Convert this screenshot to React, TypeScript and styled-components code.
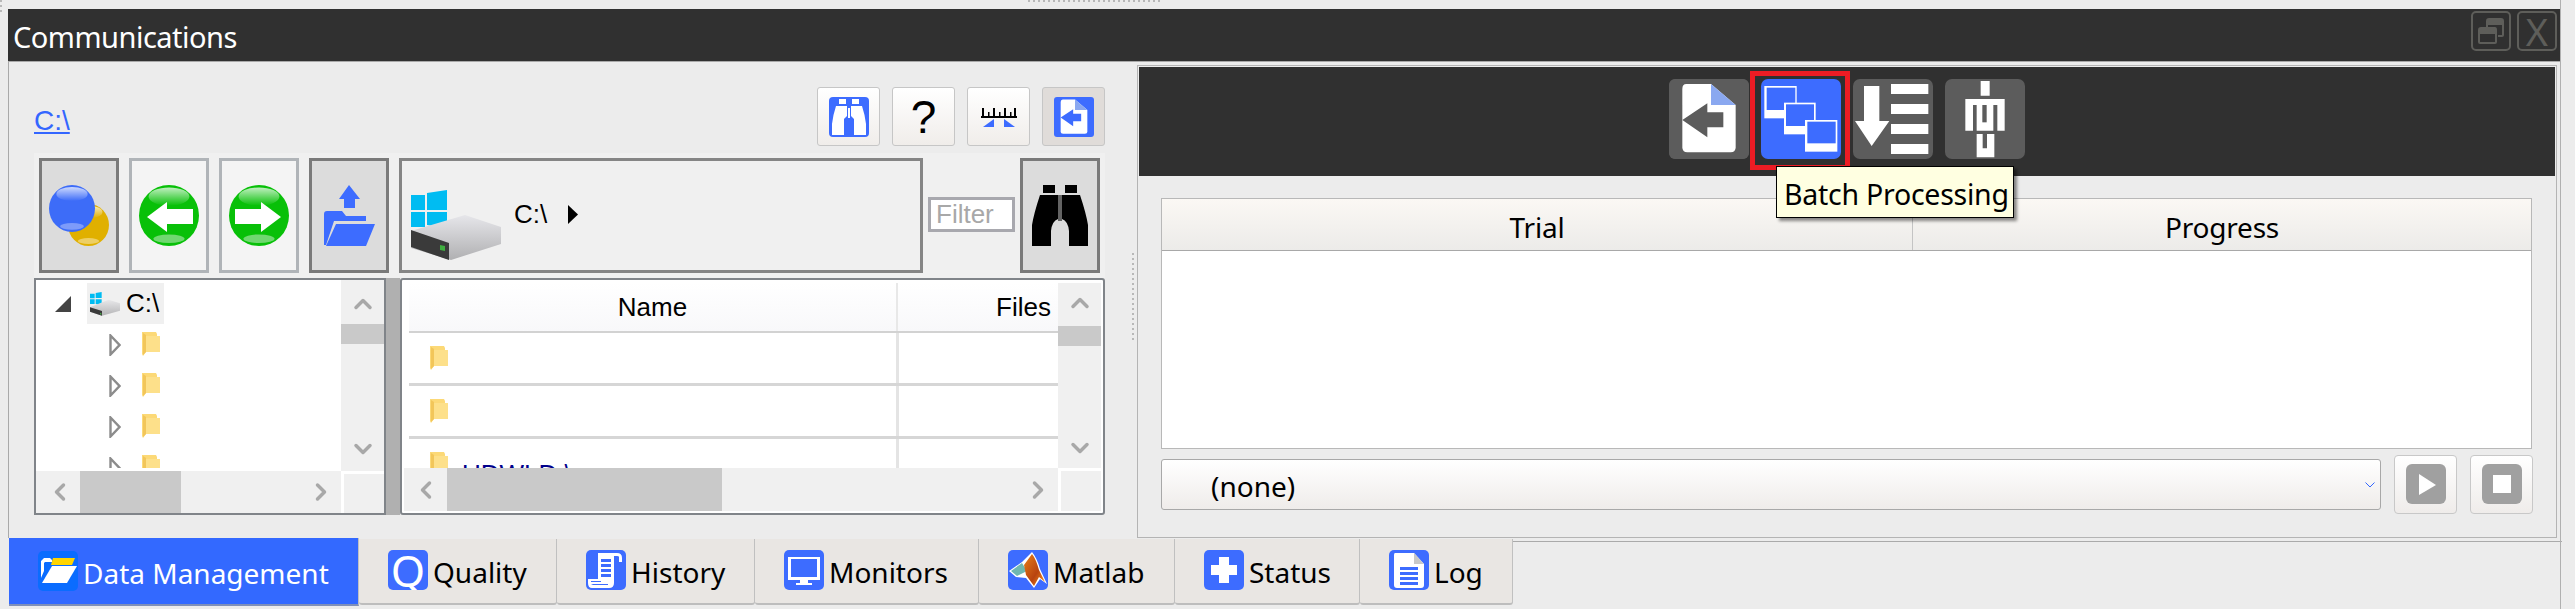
import * as React from 'react';
import styled, { createGlobalStyle } from 'styled-components';
import { ChevronUp, ChevronDown, ChevronLeft, ChevronRight } from 'lucide-react';

const UI_FONT = `"Noto Sans", "Open Sans", sans-serif`;
const TABLE_FONT = `"Liberation Sans", Arial, sans-serif`;
const BLUE = '#3d6cff';

const GlobalStyle = createGlobalStyle`
  html, body { margin: 0; padding: 0; background: #ececec; overflow: hidden; }
  * { box-sizing: border-box; }
`;

const Page = styled.div`
  position: relative;
  width: 2575px;
  height: 609px;
  padding: 9px 14px 0 8px;
  background: #ececec;
  font-family: ${UI_FONT};
`;

const CornerDots = styled.div`
  position: absolute;
  left: 0;
  top: 0;
  width: 2px;
  height: 14px;
  background: repeating-linear-gradient(to bottom, #b8b8b8 0 2px, transparent 2px 5px);
`;

const TopDots = styled.div`
  position: absolute;
  left: 1028px;
  top: 0;
  width: 132px;
  height: 2px;
  background: repeating-linear-gradient(to right, #b8b8b8 0 2px, transparent 2px 5px);
`;

const EdgeLine = styled.div`
  position: absolute;
  left: 2560px;
  top: 0;
  width: 1px;
  height: 609px;
  background: #b0b0b0;
`;

const TitleBar = styled.header`
  display: flex;
  align-items: center;
  justify-content: space-between;
  height: 53px;
  padding: 0 4px 0 5px;
  background: #303030;
  border-bottom: 1px solid #a9a9a9;
`;

const TitleText = styled.span`
  color: #fff;
  font-size: 29px;
  letter-spacing: -0.5px;
  line-height: 1;
  margin-top: 2px;
`;

const WindowButtons = styled.div`
  display: flex;
  gap: 6px;
  margin-top: -8px;
`;

const WindowButton = styled.div`
  display: flex;
  align-items: center;
  justify-content: center;
  width: 40px;
  height: 40px;
  border: 2px solid #5e5e5a;
  border-radius: 5px;
  color: #5e5e5a;
  font-size: 38px;
  line-height: 1;
`;

const Work = styled.div`
  display: flex;
  height: 476px;
  border-left: 1px solid #a9a9a9;
`;

const LeftPane = styled.section`
  width: 1121px;
  padding: 25px 0 0 25px;
  flex: none;
`;

const PathRow = styled.div`
  display: flex;
  align-items: center;
  justify-content: space-between;
  width: 1071px;
  height: 59px;
`;

const PathLink = styled.a`
  color: #3366ff;
  font-family: ${TABLE_FONT};
  font-size: 28px;
  line-height: 30px;
  margin-top: 8px;
  text-decoration: underline;
`;

const ToolGroup = styled.div`
  display: flex;
  gap: 12px;
`;

const ToolButton = styled.div<{ $on?: boolean }>`
  display: flex;
  align-items: center;
  justify-content: center;
  width: 63px;
  height: 59px;
  border: 1px solid #c6c6c6;
  border-radius: 3px;
  background: ${p => (p.$on ? '#e0dcd9' : 'linear-gradient(to bottom, #ffffff, #f0edea)')};
  font-family: ${TABLE_FONT};
  font-size: 46px;
  line-height: 1;
  color: #000;
`;

const NavStrip = styled.div`
  display: flex;
  align-items: stretch;
  gap: 10px;
  width: 1071px;
  height: 125px;
  margin-top: 7px;
  padding: 5px;
  background: #f0f0f0;
`;

const NavButton = styled.div<{ $pressed?: boolean }>`
  display: flex;
  align-items: center;
  justify-content: center;
  width: 80px;
  flex: none;
  border: 3px solid ${p => (p.$pressed ? '#7a7a7a' : '#b0b4b8')};
  background: ${p => (p.$pressed ? '#dcdcdc' : '#f4f4f4')};
`;

const AddressBox = styled.div`
  display: flex;
  align-items: center;
  width: 524px;
  flex: none;
  padding-left: 9px;
  border: 3px solid #858585;
  background: #f0f0f0;
  font-family: ${TABLE_FONT};
  font-size: 26px;
  color: #000;
`;

const DriveSlot = styled.div`
  display: flex;
  margin-top: 19px;
`;

const AddressText = styled.span`
  margin: -2px 21px 0 11px;
`;

const AddressCaret = styled.svg`
  margin-top: -2px;
`;

const FilterGroup = styled.div`
  display: flex;
  align-items: stretch;
  gap: 5px;
  margin-left: -5px;
`;

const FilterInput = styled.input`
  align-self: center;
  width: 87px;
  height: 35px;
  margin-top: -2px;
  padding: 0 0 0 5px;
  border: 3px solid #a8a8ae;
  background: #fff;
  font-family: ${TABLE_FONT};
  font-size: 26px;
  outline: none;
  &::placeholder { color: #a8a8a8; opacity: 1; }
`;

const Browser = styled.div`
  display: flex;
  width: 1071px;
  height: 237px;
`;

const TreePane = styled.div`
  display: grid;
  grid-template-columns: 1fr 43px;
  grid-template-rows: 191px 42px;
  width: 352px;
  flex: none;
  border: 2px solid #808489;
  background: #fff;
`;

const SplitBar = styled.div`
  width: 14px;
  flex: none;
  background: #b0b0b0;
`;

const ListPane = styled.div`
  display: grid;
  grid-template-columns: 1fr 43px;
  grid-template-rows: 185px 43px;
  flex: 1;
  padding: 3px 2px 2px 2px;
  border: 2px solid #808489;
  border-radius: 3px;
  background: #fff;
`;

const TreeView = styled.div`
  overflow: hidden;
  padding-top: 3px;
  height: 188px;
  font-family: ${TABLE_FONT};
  font-size: 26px;
`;

const TreeRow = styled.div<{ $depth: number }>`
  display: flex;
  align-items: center;
  height: 41px;
  padding-left: ${p => (p.$depth === 0 ? 19 : 73)}px;
  gap: ${p => (p.$depth === 0 ? 16 : 21)}px;
`;

const TreeSelected = styled.div`
  display: flex;
  align-items: center;
  gap: 6px;
  width: 77px;
  height: 41px;
  padding-left: 3px;
  background: #f0f0f0;
`;

const TreeClipped = styled.span`
  margin: 26px 0 0 -7px;
  color: #000;
  white-space: nowrap;
`;

const ListView = styled.div`
  overflow: hidden;
  padding-left: 5px;
  font-family: ${TABLE_FONT};
  font-size: 26px;
`;

const ListHeader = styled.div`
  display: grid;
  grid-template-columns: 487px 1fr;
  height: 50px;
  border-bottom: 2px solid #d2d2d2;
  background: linear-gradient(to bottom, #ffffff, #f8f8fa);
  color: #000;
`;

const HeaderCell = styled.div<{ $end?: boolean }>`
  display: flex;
  align-items: center;
  justify-content: ${p => (p.$end ? 'flex-end' : 'center')};
  padding-right: ${p => (p.$end ? 7 : 0)}px;
  border-left: ${p => (p.$end ? '2px solid #e8e8e8' : 'none')};
`;

const ListRow = styled.div`
  display: grid;
  grid-template-columns: 487px 1fr;
  height: 53px;
  border-bottom: 3px solid #d6d6d6;
`;

const NameCell = styled.div`
  display: flex;
  align-items: flex-start;
  gap: 14px;
  padding: 13px 0 0 21px;
  color: #00008b;
  line-height: 30px;
  white-space: nowrap;
`;

const FilesCell = styled.div`
  border-left: 3px solid #e4e4e4;
`;

const ClippedName = styled.span`
  margin-top: 7px;
`;

const VBar = styled.div<{ $pb?: number }>`
  display: flex;
  flex-direction: column;
  padding-bottom: ${p => p.$pb ?? 0}px;
  background: #f0f0f0;
`;

const VBtn = styled.div<{ $h: number; $mt?: number }>`
  display: flex;
  align-items: center;
  justify-content: center;
  height: ${p => p.$h}px;
  flex: none;
  margin-top: ${p => p.$mt ?? 0}px;
  color: #a8a8a8;
`;

const VThumb = styled.div`
  height: 20px;
  flex: none;
  background: #c9c9c9;
`;

const VSpace = styled.div`
  flex: 1;
`;

const HBar = styled.div<{ $inset?: number }>`
  display: flex;
  align-items: stretch;
  padding-left: ${p => p.$inset ?? 0}px;
  background: #f0f0f0;
`;

const HBtn = styled.div<{ $w?: number }>`
  display: flex;
  align-items: center;
  justify-content: center;
  width: ${p => p.$w ?? 40}px;
  flex: none;
  color: #a8a8a8;
`;

const HThumb = styled.div<{ $w: number }>`
  width: ${p => p.$w}px;
  flex: none;
  background: #c9c9c9;
`;

const HTrackEnd = styled.div`
  flex: 1;
`;

const Corner = styled.div`
  margin: 3px 0 0 3px;
  background: #f0f0f0;
`;

const Grip = styled.div`
  width: 7px;
  flex: none;
  display: flex;
  justify-content: center;
`;

const GripDots = styled.div`
  width: 2px;
  height: 87px;
  margin-top: 191px;
  margin-left: -2px;
  background: repeating-linear-gradient(to bottom, #b8b8b8 0 2px, transparent 2px 5px);
`;

const RightPane = styled.section`
  flex: 1;
  height: 473px;
  margin-top: 3px;
  margin-right: 4px;
  padding: 1px;
  border: 1px solid #b4b4b4;
`;

const ActionBar = styled.div`
  display: flex;
  justify-content: center;
  align-items: flex-start;
  gap: 12px;
  height: 109px;
  padding-top: 12px;
  background: #303030;
`;

const ActionButton = styled.div<{ $on?: boolean }>`
  position: relative;
  width: 80px;
  height: 80px;
  border-radius: 7px;
  background: ${p => (p.$on ? BLUE : '#5c5c5c')};
`;

const Highlight = styled.div`
  position: absolute;
  left: -11px;
  top: -8px;
  width: 100px;
  height: 99px;
  border: 5px solid #ed1c24;
  pointer-events: none;
`;

const Tooltip = styled.div`
  position: absolute;
  left: 15px;
  top: 87px;
  z-index: 5;
  width: 238px;
  height: 52px;
  padding-left: 7px;
  border: 1px solid #000;
  background: #ffffe1;
  box-shadow: 3px 3px 3px rgba(0, 0, 0, 0.45);
  color: #000;
  font-size: 28.5px;
  letter-spacing: -0.25px;
  line-height: 54px;
  white-space: nowrap;
`;

const TrialTable = styled.div`
  display: flex;
  flex-direction: column;
  height: 251px;
  margin: 22px 23px 0 22px;
  border: 1px solid #b8b8b8;
  background: #fff;
`;

const TrialHead = styled.div`
  display: grid;
  grid-template-columns: 750px 1fr;
  height: 52px;
  flex: none;
  border-bottom: 1px solid #a8a8a8;
  background: linear-gradient(to bottom, #fbf8f4, #ecebe9);
`;

const TrialCol = styled.div<{ $split?: boolean }>`
  display: flex;
  align-items: center;
  justify-content: center;
  padding-top: 4px;
  border-left: ${p => (p.$split ? '1px solid #c4c4c4' : 'none')};
  color: #000;
  font-size: 28px;
  letter-spacing: -0.2px;
`;

const RunRow = styled.div`
  display: flex;
  align-items: center;
  gap: 13px;
  height: 58px;
  margin: 6px 22px 0 22px;
`;

const Combo = styled.div`
  position: relative;
  display: flex;
  align-items: center;
  flex: 1;
  height: 51px;
  padding: 4px 0 0 49px;
  border: 1px solid #a8a8a8;
  border-radius: 3px;
  background: linear-gradient(to bottom, #ffffff, #efecea);
  color: #000;
  font-size: 28px;
`;

const ComboArrow = styled.svg`
  position: absolute;
  right: 5px;
  top: 22px;
`;

const RunButton = styled.div`
  display: flex;
  align-items: center;
  justify-content: center;
  width: 63px;
  height: 59px;
  flex: none;
  border: 1px solid #c8c8c8;
  border-radius: 4px;
  background: linear-gradient(to bottom, #ffffff, #efecea);
`;

const TabBar = styled.nav`
  display: flex;
  align-items: flex-start;
  margin-left: 1px;
`;

const Tab = styled.div<{ $w: number; $active?: boolean }>`
  display: flex;
  align-items: center;
  gap: 5px;
  width: ${p => p.$w}px;
  height: ${p => (p.$active ? 68 : 66)}px;
  flex: none;
  padding: ${p => (p.$active ? '0 0 0 29px' : '0 0 2px 29px')};
  margin-top: ${p => (p.$active ? 0 : 1)}px;
  background: ${p => (p.$active ? '#3369ff' : '#e9e6e3')};
  border-bottom: ${p => (p.$active ? '2px solid #7f8fb8' : '2px solid #bdbdbd')};
  border-right: 1px solid #c0c0c0;
  border-radius: ${p => (p.$active ? 0 : '0 0 3px 3px')};
  color: ${p => (p.$active ? '#fff' : '#000')};
  font-size: 28px;
  line-height: 1;
  white-space: nowrap;
`;

const TabLabel = styled.span`
  margin-top: 4px;
`;

const TabBadge = styled.div<{ $color?: string }>`
  display: flex;
  align-items: center;
  justify-content: center;
  width: 40px;
  height: 40px;
  flex: none;
  overflow: hidden;
  border-radius: 5px;
  background: ${p => p.$color ?? BLUE};
  color: #fff;
  font-size: 44px;
  line-height: 40px;
`;

const TabRest = styled.div`
  flex: 1;
  height: 1px;
  margin-top: 3px;
  margin-right: -1px;
  background: #aaaaaa;
`;

const DriveIcon = ({ size }: { size: number }) => (
  <svg width={size} height={size} viewBox="0 0 90 70">
    <defs>
      <linearGradient id={`dr${size}`} x1="0" y1="0" x2="0" y2="1">
        <stop offset="0" stopColor="#e8e8ea" />
        <stop offset="1" stopColor="#b4b4b6" />
      </linearGradient>
    </defs>
    <path d="M0 4h14v14H0zM17 2l18-3v18H17zM0 21h14v14H0zM17 21h18v17l-18-3z" fill="#00bcf2" />
    <path d="M0 45 L56 22 L90 33 V55 L36 70 L0 58 Z" fill={`url(#dr${size})`} />
    <path d="M0 45 L36 56 V70 L0 58 Z" fill="#3a3a3a" />
    <path d="M30 62l4 1v4l-4-1z" fill="#3fae3f" />
  </svg>
);

const TreeFolder = () => (
  <svg width="18" height="26" viewBox="0 0 18 26">
    <path d="M0 0h14l1 2v18H4l-3 4-1-2z" fill="#fcd977" />
    <path d="M4 4h14v16H4z" fill="#fde08a" />
    <path d="M1 1v22l3-3V3z" fill="#f2c65a" />
  </svg>
);

const OpenArrow = () => (
  <svg width="16" height="16" viewBox="0 0 16 16">
    <path d="M0 16 L16 0 V16 Z" fill="#444" />
  </svg>
);

const ClosedArrow = () => (
  <svg width="12" height="22" viewBox="0 0 12 22">
    <path d="M1.5 1.5 L10.5 11 L1.5 20.5 Z" fill="#fff" stroke="#8c8c8c" strokeWidth="2.4" />
  </svg>
);

const Sphere = ({ id, color, light, cx, cy, rx, ry }: { id: string; color: string; light: string; cx: number; cy: number; rx: number; ry: number }) => (
  <>
    <defs>
      <linearGradient id={id} x1="0" y1="0" x2="0" y2="1">
        <stop offset="0" stopColor="#fff" stopOpacity="0.75" />
        <stop offset="1" stopColor="#fff" stopOpacity="0" />
      </linearGradient>
    </defs>
    <ellipse cx={cx} cy={cy} rx={rx} ry={ry} fill={color} />
    <ellipse cx={cx} cy={cy - ry * 0.62} rx={rx * 0.68} ry={ry * 0.3} fill={`url(#${id})`} />
    <ellipse cx={cx} cy={cy + ry * 0.76} rx={rx * 0.52} ry={ry * 0.14} fill={light} />
  </>
);

const ModeIcon = () => (
  <svg width="60" height="61" viewBox="0 0 60 61">
    <Sphere id="yel" color="#e0b000" light="#edcf66" cx={39.5} cy={40} rx={20.5} ry={21} />
    <Sphere id="blu" color="#3d6cf8" light="#7d9bfa" cx={23} cy={23.5} rx={23} ry={23.5} />
  </svg>
);

const GreenArrow = ({ dir }: { dir: 'left' | 'right' }) => (
  <svg width="60" height="61" viewBox="0 0 60 61">
    <Sphere id={`gr${dir}`} color="#08c008" light="#70d870" cx={30} cy={30.5} rx={30} ry={30.5} />
    <path
      d={dir === 'left' ? 'M8 32 L28 17 V24 H54 V39 H28 V47 Z' : 'M52 32 L32 17 V24 H6 V39 H32 V47 Z'}
      fill="#fff"
    />
  </svg>
);

const FolderUp = () => (
  <svg width="51" height="61" viewBox="0 0 51 61">
    <path d="M25 0 L36 14 H31 V23 H20 V14 H15 Z" fill={BLUE} />
    <path d="M0 38 V29 Q0 26 3 26 H18 L22 31 H42 V36 H10 L2 60 H0 Z" fill={BLUE} />
    <path d="M12 39 H51 L42 61 H2 Z" fill={BLUE} />
  </svg>
);

const BigDrive = () => (
  <svg width="92" height="70" viewBox="0 0 92 70">
    <defs>
      <linearGradient id="bigdr" x1="0" y1="0" x2="0" y2="1">
        <stop offset="0" stopColor="#e6e6ea" />
        <stop offset="1" stopColor="#b0b0b2" />
      </linearGradient>
    </defs>
    <path d="M0 5h14v15H0zM16 3l20-3v20H16zM0 22h14v15H0zM16 22h20v16l-20-3z" fill="#00bcf2" />
    <path d="M0 41 L54 25 L90 37 V54 L40 70 L0 58 Z" fill="url(#bigdr)" />
    <path d="M0 40 L38 53 V70 L0 57 Z" fill="#3a3a3a" />
    <path d="M29 55l5 1v5l-5-1z" fill="#3fae3f" />
  </svg>
);

const BinocularsShape = ({ color }: { color: string }) => (
  <>
    <rect x="11" y="0" width="12" height="8" fill={color} />
    <rect x="33" y="0" width="12" height="8" fill={color} />
    <path d="M8 10 H26 V34 Q20 36 19 46 V61 H0 V40 Q2 28 8 10 Z M30 10 H48 Q54 28 56 40 V61 H37 V46 Q36 36 30 34 Z" fill={color} />
    <rect x="26" y="10" width="4" height="26" fill={color} opacity="0.55" />
  </>
);

const BigBinoculars = () => (
  <svg width="56" height="61" viewBox="0 0 56 61">
    <BinocularsShape color="#000" />
  </svg>
);

const BlueBinoculars = () => (
  <svg width="40" height="40" viewBox="0 0 40 40">
    <rect width="40" height="40" rx="4" fill={BLUE} />
    <rect x="10" y="2" width="7" height="5" fill="#fff" />
    <rect x="23" y="2" width="7" height="5" fill="#fff" />
    <path d="M7 9 H18 V19 Q17 20 15 22 V38 H3 V27 Q4 18 7 9 Z M22 9 H33 Q36 18 37 27 V38 H25 V22 Q23 20 22 19 Z" fill="#fff" />
    <rect x="19" y="11" width="2" height="10" fill="#fff" />
  </svg>
);

const RulerIcon = () => (
  <svg width="36" height="20" viewBox="0 0 36 20">
    <path d="M0 9 H36 V11 H0 Z M1 1 h2 v9 h-2z M7 5 h1.5 v5 h-1.5z M12 1 h2 v9 h-2z M18 5 h1.5 v5 h-1.5z M23 1 h2 v9 h-2z M29 5 h1.5 v5 h-1.5z M33 1 h2 v9 h-2z" fill="#000" />
    <path d="M2 20 L13 12 V20 Z M34 20 L23 12 V20 Z" fill={BLUE} />
  </svg>
);

const BackDoc = ({ size, bg, fold, arrow }: { size: number; bg: string; fold: string; arrow: string }) => (
  <svg width={size} height={size} viewBox="0 0 240 240">
    <rect width="240" height="240" rx="18" fill={bg} />
    <path d="M52 15 H126 L200 78 V205 Q200 220 185 220 H55 Q40 220 40 205 V30 Q40 15 52 15 Z" fill="#fff" />
    <path d="M126 15 L200 78 H126 Z" fill={fold} />
    <path d="M40 123 L115 73 V100 H163 V145 H115 V175 Z" fill={arrow} />
  </svg>
);

const BatchIcon = () => (
  <svg width="80" height="80" viewBox="0 0 240 240">
    <rect x="10" y="21" width="97" height="97" fill="#fff" />
    <rect x="17" y="26" width="86" height="67" fill={BLUE} />
    <rect x="69" y="71" width="95" height="95" fill="#fff" />
    <rect x="75" y="76" width="84" height="65" fill={BLUE} />
    <rect x="132" y="123" width="97" height="95" fill="#fff" />
    <rect x="139" y="128" width="85" height="65" fill={BLUE} />
  </svg>
);

const SortIcon = () => (
  <svg width="80" height="80" viewBox="0 0 240 240">
    <path d="M33 21 H79 V126 H109 L56 201 L6 126 H33 Z" fill="#fff" />
    <path d="M114 15 H226 V45 H114 Z M114 75 H226 V105 H114 Z M114 135 H226 V165 H114 Z M114 195 H226 V225 H114 Z" fill="#fff" />
  </svg>
);

const PersonIcon = () => (
  <svg width="80" height="80" viewBox="0 0 240 240">
    <path
      d="M107 6 H134 V50 H107 Z M61 60 H179 V155 H157 V78 H145 V155 H95 V78 H84 V155 H61 Z M95 165 H113 V208 H126 V165 H148 V235 H95 Z"
      fill="#fff"
    />
    <rect x="112" y="78" width="13" height="52" fill="#5c5c5c" />
  </svg>
);

const PlayIcon = () => (
  <svg width="40" height="40" viewBox="0 0 40 40">
    <rect width="40" height="40" rx="6" fill="#a0a0a0" />
    <path d="M13 10 L30 21 L13 31 Z" fill="#fff" />
  </svg>
);

const StopIcon = () => (
  <svg width="40" height="40" viewBox="0 0 40 40">
    <rect width="40" height="40" rx="6" fill="#a0a0a0" />
    <rect x="11" y="11" width="18" height="18" fill="#fff" />
  </svg>
);

const RestoreIcon = () => (
  <svg width="30" height="30" viewBox="0 0 30 30">
    <path d="M10 5 Q10 2 13 2 H25 Q28 2 28 5 V19 Q28 21 26 21 H22 V19 H26 V9 H12 V11 H10 Z" fill="#5e5e5a" />
    <path d="M2 14 Q2 11 5 11 H19 Q21 11 21 14 V26 Q21 28 19 28 H4 Q2 28 2 26 Z M4 18 V26 H19 V18 Z" fill="#5e5e5a" />
  </svg>
);

const OpenFolderBadge = () => (
  <svg width="40" height="40" viewBox="0 0 40 40">
    <path d="M15 7 H37 L34 14 H13 Z" fill="#ffd400" />
    <path d="M3 27 V10 L6 7 H12 L14 9 V11 H7 L6 12 V20 Z" fill="#fff" />
    <path d="M14 15 H39 L29 32 H4 Z" fill="#fff" />
  </svg>
);

const ScrollIcon = () => (
  <svg width="40" height="40" viewBox="0 0 40 40">
    <path d="M12 3 H31 Q36 3 36 8 V12 H33 V7 Q33 6 31 6 H28 V33 Q28 38 23 38 H6 Q2 38 2 33 V29 H12 Z" fill="#fff" />
    <path d="M5 32 H15 V31 H5 Z M5 34 H22 V35 H7 Z" fill={BLUE} />
    <path d="M15 9 H25 V12 H15 Z M15 14 H25 V17 H15 Z M15 19 H25 V22 H15 Z M15 24 H25 V27 H15 Z" fill={BLUE} />
  </svg>
);

const MonitorIcon = () => (
  <svg width="40" height="40" viewBox="0 0 40 40">
    <path d="M4 7 H36 V30 H4 Z M7 9 V27 H33 V9 Z" fill="#fff" fillRule="evenodd" />
    <path d="M16 30 H24 V33 H28 V35 H12 V33 H16 Z" fill="#fff" />
  </svg>
);

const MatlabIcon = () => (
  <svg width="40" height="40" viewBox="0 0 40 40">
    <defs>
      <linearGradient id="mat" x1="0" y1="0" x2="1" y2="1">
        <stop offset="0" stopColor="#e8801a" />
        <stop offset="0.6" stopColor="#b8430f" />
        <stop offset="1" stopColor="#ffa020" />
      </linearGradient>
    </defs>
    <path d="M1 21 L14 12 L24 2 Q29 8 32 19 L39 34 L32 29 L26 38 L18 28 L8 27 Z" fill="#fff" />
    <path d="M3 21 L14 13 L19 21 L9 26 Z" fill="#6fb7b0" />
    <path d="M16 15 L24 4 Q28 9 31 20 L37 32 L31 27 L26 36 L18 25 Z" fill="url(#mat)" />
  </svg>
);

const PlusIcon = () => (
  <svg width="40" height="40" viewBox="0 0 40 40">
    <path d="M15 7 H25 V15 H33 V25 H25 V33 H15 V25 H7 V15 H15 Z" fill="#fff" />
  </svg>
);

const LogIcon = () => (
  <svg width="40" height="40" viewBox="0 0 40 40">
    <path d="M6 3 H25 L35 14 V35 Q35 38 32 38 H8 Q5 38 5 35 V5 Q5 3 6 3 Z" fill="#fff" />
    <path d="M25 3 L35 14 H25 Z" fill="#c8c8c8" />
    <path d="M11 17 H29 V20 H11 Z M11 22 H29 V25 H11 Z M11 27 H29 V30 H11 Z M11 32 H29 V35 H11 Z" fill={BLUE} />
  </svg>
);

const TABS = [
  { label: 'Data Management', w: 350, active: true, badge: '#0a6cff', icon: <OpenFolderBadge /> },
  { label: 'Quality', w: 198, icon: 'Q' },
  { label: 'History', w: 198, icon: <ScrollIcon /> },
  { label: 'Monitors', w: 224, icon: <MonitorIcon /> },
  { label: 'Matlab', w: 196, icon: <MatlabIcon /> },
  { label: 'Status', w: 185, icon: <PlusIcon /> },
  { label: 'Log', w: 153, icon: <LogIcon /> },
];

const App = () => (
  <Page>
    <GlobalStyle />
    <CornerDots />
    <TopDots />
    <EdgeLine />
    <TitleBar>
      <TitleText>Communications</TitleText>
      <WindowButtons>
        <WindowButton><RestoreIcon /></WindowButton>
        <WindowButton>X</WindowButton>
      </WindowButtons>
    </TitleBar>
    <Work>
      <LeftPane>
        <PathRow>
          <PathLink>C:\</PathLink>
          <ToolGroup>
            <ToolButton><BlueBinoculars /></ToolButton>
            <ToolButton>?</ToolButton>
            <ToolButton><RulerIcon /></ToolButton>
            <ToolButton $on><BackDoc size={40} bg={BLUE} fold="#8aa8f0" arrow={BLUE} /></ToolButton>
          </ToolGroup>
        </PathRow>
        <NavStrip>
          <NavButton $pressed><ModeIcon /></NavButton>
          <NavButton><GreenArrow dir="left" /></NavButton>
          <NavButton><GreenArrow dir="right" /></NavButton>
          <NavButton $pressed><FolderUp /></NavButton>
          <AddressBox>
            <DriveSlot><BigDrive /></DriveSlot>
            <AddressText>C:\</AddressText>
            <AddressCaret width="10" height="19" viewBox="0 0 10 19">
              <path d="M0 0 L10 9.5 L0 19 Z" fill="#000" />
            </AddressCaret>
          </AddressBox>
          <FilterGroup>
            <FilterInput placeholder="Filter" />
            <NavButton $pressed><BigBinoculars /></NavButton>
          </FilterGroup>
        </NavStrip>
        <Browser>
          <TreePane>
            <TreeView>
              <TreeRow $depth={0}>
                <OpenArrow />
                <TreeSelected><DriveIcon size={30} />C:\</TreeSelected>
              </TreeRow>
              {[0, 1, 2, 3].map(i => (
                <TreeRow $depth={1} key={i}>
                  <ClosedArrow />
                  <TreeFolder />
                  {i === 3 && <TreeClipped>WTL</TreeClipped>}
                </TreeRow>
              ))}
            </TreeView>
            <VBar $pb={3}>
              <VBtn $h={41} $mt={3}><ChevronUp size={28} strokeWidth={3} /></VBtn>
              <VThumb />
              <VSpace />
              <VBtn $h={38}><ChevronDown size={28} strokeWidth={3} /></VBtn>
            </VBar>
            <HBar $inset={4}>
              <HBtn><ChevronLeft size={28} strokeWidth={3} /></HBtn>
              <HThumb $w={101} />
              <HTrackEnd />
              <HBtn><ChevronRight size={28} strokeWidth={3} /></HBtn>
            </HBar>
            <Corner />
          </TreePane>
          <SplitBar />
          <ListPane>
            <ListView>
              <ListHeader>
                <HeaderCell>Name</HeaderCell>
                <HeaderCell $end>Files</HeaderCell>
              </ListHeader>
              <ListRow>
                <NameCell><TreeFolder /></NameCell>
                <FilesCell />
              </ListRow>
              <ListRow>
                <NameCell><TreeFolder /></NameCell>
                <FilesCell />
              </ListRow>
              <ListRow>
                <NameCell><TreeFolder /><ClippedName>UDWLD:\</ClippedName></NameCell>
                <FilesCell />
              </ListRow>
            </ListView>
            <VBar>
              <VBtn $h={40}><ChevronUp size={28} strokeWidth={3} /></VBtn>
              <VBtn $h={3} />
              <VThumb />
              <VSpace />
              <VBtn $h={40}><ChevronDown size={28} strokeWidth={3} /></VBtn>
            </VBar>
            <HBar>
              <HBtn $w={43}><ChevronLeft size={28} strokeWidth={3} /></HBtn>
              <HThumb $w={275} />
              <HTrackEnd />
              <HBtn><ChevronRight size={28} strokeWidth={3} /></HBtn>
            </HBar>
            <Corner />
          </ListPane>
        </Browser>
      </LeftPane>
      <Grip><GripDots /></Grip>
      <RightPane>
        <ActionBar>
          <ActionButton><BackDoc size={80} bg="#5c5c5c" fold="#8aa8f0" arrow="#5c5c5c" /></ActionButton>
          <ActionButton $on>
            <BatchIcon />
            <Highlight />
            <Tooltip>Batch Processing</Tooltip>
          </ActionButton>
          <ActionButton><SortIcon /></ActionButton>
          <ActionButton><PersonIcon /></ActionButton>
        </ActionBar>
        <TrialTable>
          <TrialHead>
            <TrialCol>Trial</TrialCol>
            <TrialCol $split>Progress</TrialCol>
          </TrialHead>
        </TrialTable>
        <RunRow>
          <Combo>
            (none)
            <ComboArrow width="10" height="6" viewBox="0 0 10 6">
              <path d="M0.5 0.5 L5 5 L9.5 0.5" fill="none" stroke="#3366ff" strokeWidth="1" />
            </ComboArrow>
          </Combo>
          <RunButton><PlayIcon /></RunButton>
          <RunButton><StopIcon /></RunButton>
        </RunRow>
      </RightPane>
    </Work>
    <TabBar>
      {TABS.map(t => (
        <Tab key={t.label} $w={t.w} $active={t.active}>
          <TabBadge $color={t.badge}>{t.icon}</TabBadge>
          <TabLabel>{t.label}</TabLabel>
        </Tab>
      ))}
      <TabRest />
    </TabBar>
  </Page>
);

export default App;
